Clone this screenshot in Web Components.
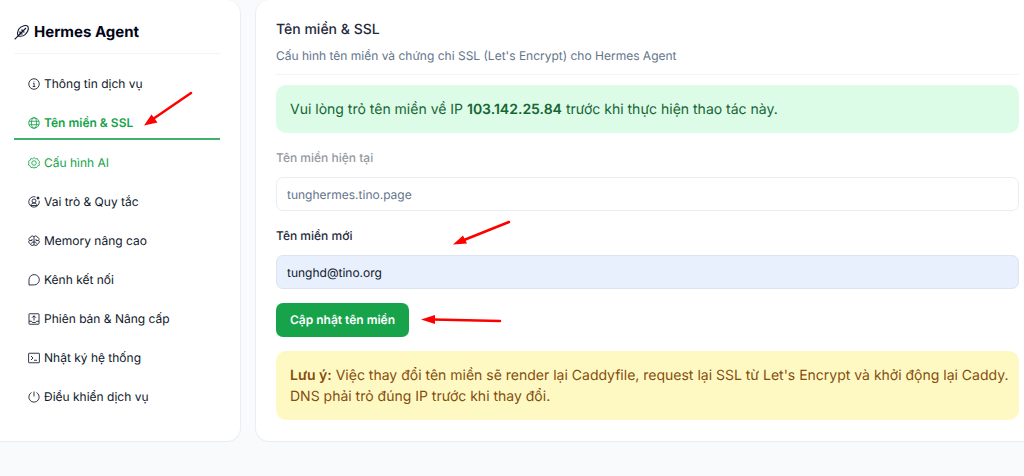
<!DOCTYPE html>
<html lang="vi">
<head>
<meta charset="utf-8">
<meta name="viewport" content="width=device-width, initial-scale=1">
<title>Hermes Agent</title>
<style>
  html { background: #f8fafc; }
  body { margin: 0; overflow-x: hidden; font-family: Inter, "Noto Sans", sans-serif; font-size: 12px; line-height: 20px; color: #0f172a; text-rendering: geometricPrecision; }
</style>
</head>
<body>
<agent-page>
  <side-nav slot="nav" heading="Hermes Agent">
    <nav-item icon="info">Thông tin dịch vụ</nav-item>
    <nav-item icon="globe" active>Tên miền &amp; SSL</nav-item>
    <nav-item icon="gear" highlight>Cấu hình AI</nav-item>
    <nav-item icon="role">Vai trò &amp; Quy tắc</nav-item>
    <nav-item icon="brain">Memory nâng cao</nav-item>
    <nav-item icon="chat">Kênh kết nối</nav-item>
    <nav-item icon="upload">Phiên bản &amp; Nâng cấp</nav-item>
    <nav-item icon="terminal">Nhật ký hệ thống</nav-item>
    <nav-item icon="power">Điều khiển dịch vụ</nav-item>
  </side-nav>
  <domain-panel>
    <span slot="title">Tên miền &amp; SSL</span>
    <span slot="subtitle">Cấu hình tên miền và chứng chỉ SSL (Let's Encrypt) cho Hermes Agent</span>
    <note-box tone="success">Vui lòng trỏ tên miền về IP <b>103.142.25.84</b> trước khi thực hiện thao tác này.</note-box>
    <text-field label="Tên miền hiện tại" value="tunghermes.tino.page" disabled></text-field>
    <text-field label="Tên miền mới" value="tunghd@tino.org"></text-field>
    <action-button>Cập nhật tên miền</action-button>
    <note-box tone="warning"><b>Lưu ý:</b> Việc thay đổi tên miền sẽ render lại Caddyfile, request lại SSL từ Let's Encrypt và khởi động lại Caddy. DNS phải trỏ đúng IP trước khi thay đổi.</note-box>
  </domain-panel>
</agent-page>
<arrow-marks></arrow-marks>

<script>
const ICONS = {
  feather: '<path d="M1 23 9 15M6 18C4 11 7 4 15 2.500c3-.5 5 .2 6 1.500 1 3-.5 8-4 11.500-3 3-7 3.500-11 2.500zM9 15 18 6M12 8v4h4M9 11v4h4"/>',
  info: '<circle cx="12" cy="12" r="10.500"/><path d="M10 10.500h2.200V17M9.500 17h5M12 6.500v1"/>',
  globe: '<circle cx="12" cy="12" r="10.500"/><ellipse cx="12" cy="12" rx="5" ry="10.500"/><path d="M2 8.500h20M2 15.500h20"/>',
  gear: '<path d="M12 1.200 15 3.700l3.800-.5 1.500 3.600 3 2.200-1.300 3.500.8 3.800-3.500 1.500L17 21.300l-3.500-1L12 22.800l-2-2.500-4 .8-1.700-3.500-3.500-1.700L2 12 .8 8.800l3.400-2 1.500-3.600 3.700.5z"/><circle cx="12" cy="12" r="4.500"/>',
  role: '<path d="M15 1.700A10.500 10.500 0 1 0 22.300 9.500"/><circle cx="12" cy="10" r="4"/><path d="M6 19c0-3.500 3-5 6-5s6 1.500 6 5z"/><circle cx="20" cy="4" r="2" fill="currentColor"/>',
  brain: '<path d="M12 4c-1-3-6-3-6.500.5C2 5 1 8.500 3 10.500c-2.500 2-2 6 1.500 7 .5 4 6 4.500 7.500 1.500 1.500 3 7 2.500 7.500-1.500 3.500-1 4-5 1.500-7 2-2 1-5.500-2.500-6C18 1 13 1 12 4zM12 4v16M3 11h5V8M21 11h-5V8M7 17c0-2 2-3 5-3M17 17c0-2-2-3-5-3"/>',
  chat: '<path d="M2 22V11.500A10.300 10.300 0 1 1 12.300 21.800z"/>',
  upload: '<rect x="2" y="1.500" width="20" height="21" rx="1"/><path d="M2 16.500h5l2 2.500h6l2-2.500h5M12 15V5.500M8 9.500l4-4 4 4"/>',
  terminal: '<rect x="1.200" y="2.500" width="21.600" height="19" rx="1"/><path d="M6 8l4 4-4 4M12 16.500h6"/>',
  power: '<path d="M7 3A10.300 10.300 0 1 0 17 3M12 1v10"/>'
};
const icon = (name, w = 2) => `<svg viewBox="0 0 24 24" fill="none" stroke="currentColor" stroke-width="${w}" stroke-linejoin="round" aria-hidden="true">${ICONS[name]}</svg>`;

const define = (name, render) => customElements.define(name, class extends HTMLElement {
  connectedCallback() {
    if (this.shadowRoot) return;
    this.attachShadow({ mode: 'open' }).innerHTML = render(this);
  }
});

define('agent-page', () => `<style>
  :host { display: block; }
  .grid { display: grid; grid-template-columns: 241px minmax(0, 1fr); gap: 14px; align-items: stretch; padding-bottom: 35px; }
  ::slotted(*) { min-width: 0; }
</style><div class="grid"><slot name="nav"></slot><slot></slot></div>`);

define('side-nav', el => `<style>
  :host { display: block; box-sizing: border-box; background: #fff; border: 1px solid #e9eef5; border-width: 0 1px 1px 0; border-radius: 0 14px 14px 0; padding: 20px 20px 22px 14px; }
  header { display: flex; align-items: center; gap: 4px; padding-bottom: 10px; border-bottom: 1px solid #f1f5f9; }
  h1 { margin: 0; font-size: 15px; line-height: 23px; font-weight: 700; color: #020617; }
  header svg { width: 16px; height: 16px; }
  nav { display: flex; flex-direction: column; padding-top: 10px; }
</style><header>${icon('feather', 1.6)}<h1>${el.getAttribute('heading')}</h1></header><nav><slot></slot></nav>`);

define('nav-item', el => `<style>
  :host { display: block; color: #0f172a; }
  :host([highlight]), :host([active]) { color: #16a34a; }
  :host([active]) { padding-bottom: 3px; }
  a { display: flex; align-items: center; gap: 4px; padding: 10px 14px 9px; color: inherit; text-decoration: none; font-size: 12px; line-height: 20px; }
  svg { width: 12px; height: 12px; flex: none; }
  :host([active]) a { font-weight: 600; padding-bottom: 5px; border-bottom: 2px solid #3db36a; }
</style><a href="#${el.getAttribute('icon')}"${el.hasAttribute('active') ? ' aria-current="page"' : ''}>${icon(el.getAttribute('icon'), 1.7)}<span><slot></slot></span></a>`);

define('domain-panel', () => `<style>
  :host { display: flex; flex-direction: column; box-sizing: border-box; background: #fff; border: 1px solid #e9eef5; border-width: 0 0 1px 1px; border-radius: 14px 0 0 14px; padding: 20px 5px 21px 20px; }
  header { border-bottom: 1px solid #f1f5f9; padding-bottom: 8px; margin-bottom: 10px; }
  h2 { margin: 0 0 6px; font-size: 14px; line-height: 20px; font-weight: 500; color: #1e293b; }
  p { margin: 0; font-size: 12px; line-height: 20px; color: #64748b; }
  form { display: flex; flex-direction: column; align-items: stretch; gap: 14px; }
</style><header><h2><slot name="title"></slot></h2><p><slot name="subtitle"></slot></p></header><form><slot></slot></form>`);

define('note-box', () => `<style>
  :host { display: block; border-radius: 10px; padding: 14px 8px 13px 14px; font-size: 14px; line-height: 21px; background: #dcfce7; color: #166534; }
  :host([tone=warning]) { background: #fef9c3; color: #854d0e; }
  ::slotted(b) { font-weight: 600; }
</style><slot></slot>`);

define('text-field', el => `<style>
  :host { display: flex; flex-direction: column; gap: 8px; }
  label { font-size: 12px; line-height: 22px; font-weight: 500; color: #1e293b; }
  input { box-sizing: border-box; width: 100%; height: 34px; margin: 0; padding: 0 10px; border: 1px solid #dbe4f0; border-radius: 7px; background: #e8f0fe; color: #0f172a; font: 12px/20px Inter, "Noto Sans", sans-serif; text-rendering: inherit; }
  :host([disabled]) label { color: #94989f; }
  input:disabled { background: #fff; border-color: #e9eef5; color: #64748b; }
</style><label for="f">${el.getAttribute('label')}</label><input id="f" type="text" value="${el.getAttribute('value')}"${el.hasAttribute('disabled') ? ' disabled' : ''}>`);

define('action-button', () => `<style>
  :host { display: flex; }
  button { margin: 0; padding: 7px 14px; border: 0; border-radius: 7px; background: #16a34a; color: #fff; font: 600 12px/20px Inter, "Noto Sans", sans-serif; text-rendering: inherit; cursor: pointer; }
</style><button type="button"><slot></slot></button>`);

define('arrow-marks', () => `<style>
  :host { position: absolute; top: 0; left: 0; pointer-events: none; }
  svg { display: block; width: 520px; height: 340px; }
</style><svg viewBox="0 0 520 340" fill="#f00" stroke="#f00" stroke-width="2.500" stroke-linecap="round" aria-hidden="true">
  <path d="M191 93 153 119M509 222 464 240M500 321 433 319.500"/>
  <path stroke="none" d="M144 125.500 151.500 114.500 157.500 122.500zM453 244.500 463 235.500 467 243.500zM421 319.500 435 315 435 324z"/>
</svg>`);
</script>
</body>
</html>
